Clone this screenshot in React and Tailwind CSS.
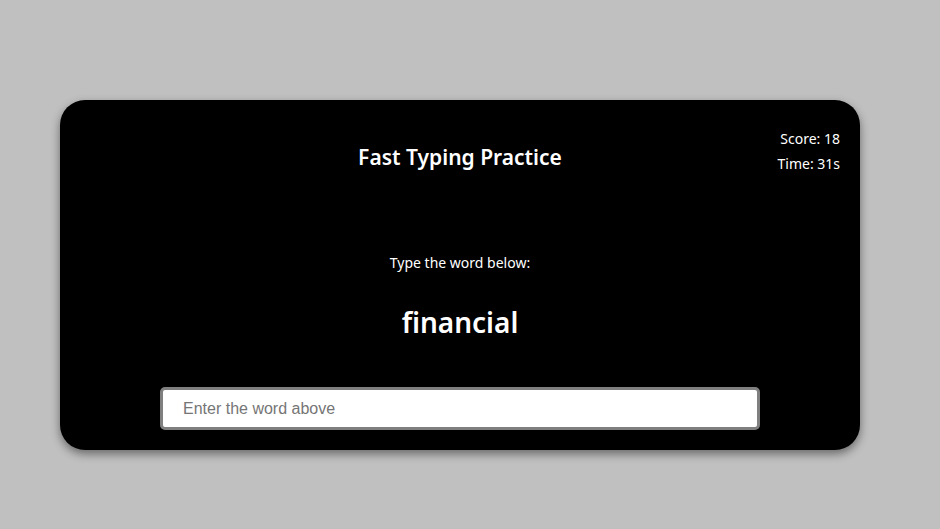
import React, { useState } from "react";

export default function App() {
  const [value, setValue] = useState("");

  return (
    <div className="min-h-screen w-full bg-[#c0c0c0] pl-[60px] pt-[100px]" style={{ fontFamily: '"Noto Sans", sans-serif' }}>
      <div className="relative flex w-[800px] h-[350px] flex-col items-center rounded-[25px] bg-black px-5 pb-5 pt-[42px] text-white shadow-[0_4px_10px_rgba(0,0,0,0.45)]">
        <div className="absolute right-5 top-[26px] text-right text-[14px] leading-[25px]">
          <div>Score: 18</div>
          <div>Time: 31s</div>
        </div>

        <h1 className="h-[30px] text-[21px] font-semibold leading-[30px]">Fast Typing Practice</h1>

        <p className="mt-[81px] text-[14px] leading-[20px]">Type the word below:</p>

        <div className="mt-[29px] text-[28px] font-semibold leading-[40px]">financial</div>

        <input
          type="text"
          autoFocus
          value={value}
          onChange={(e) => setValue(e.target.value)}
          placeholder="Enter the word above"
          className="mt-[45px] h-[43px] w-[600px] shrink-0 rounded-[5px] border-[3px] border-[#7f7f7f] bg-white pl-[20px] pr-5 text-[16px] text-black caret-black outline-none placeholder:text-[#757575]"
          style={{ fontFamily: '"Liberation Sans", Arial, sans-serif' }}
        />
      </div>
    </div>
  );
}
